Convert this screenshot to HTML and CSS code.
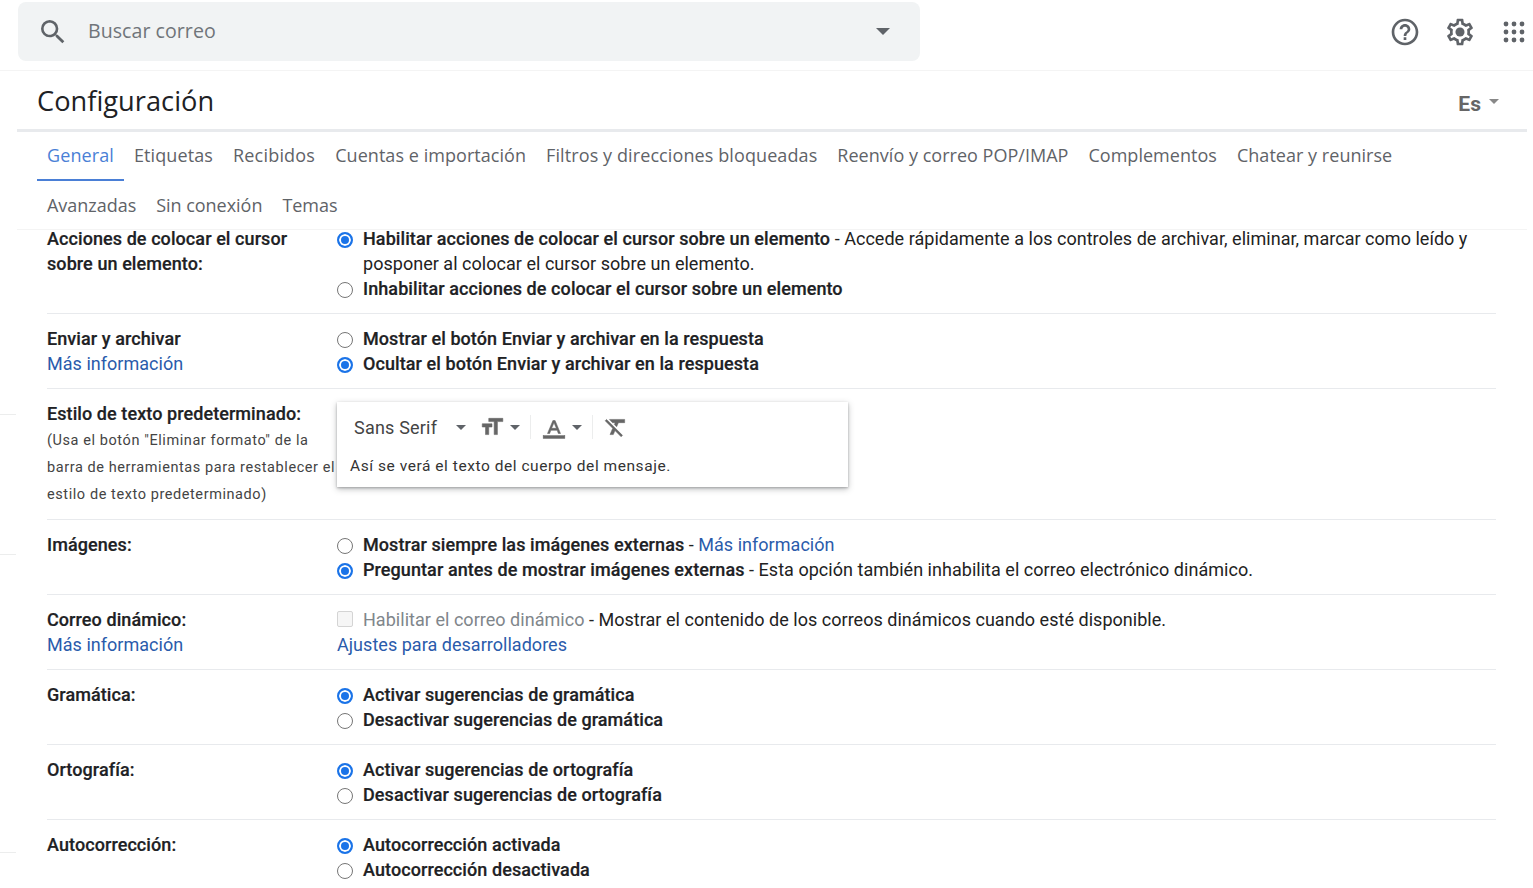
FILE: index.html
```html
<!DOCTYPE html>
<html lang="es">
<head>
<meta charset="utf-8">
<title>Configuración</title>
<link rel="stylesheet" href="styles.css">
</head>
<body>
<i class="tick tick-a"></i><i class="tick tick-b"></i><i class="tick tick-c"></i>
<header class="topbar">
  <div class="search">
    <svg class="search-icon" viewBox="0 0 24 24"><path d="M15.5 14h-.79l-.28-.27A6.471 6.471 0 0 0 16 9.5 6.5 6.5 0 1 0 9.5 16c1.61 0 3.09-.59 4.23-1.57l.27.28v.79l5 4.99L20.49 19l-4.99-5zm-6 0C7.01 14 5 11.99 5 9.5S7.01 5 9.5 5 14 7.01 14 9.5 11.99 14 9.5 14z"/></svg>
    <span class="search-text">Buscar correo</span>
    <span class="caret caret-search"></span>
  </div>
  <div class="top-icons">
    <svg class="top-icon" viewBox="0 0 24 24"><path d="M11 18h2v-2h-2v2zm1-16C6.48 2 2 6.48 2 12s4.48 10 10 10 10-4.48 10-10S17.52 2 12 2zm0 18c-4.41 0-8-3.59-8-8s3.59-8 8-8 8 3.59 8 8-3.59 8-8 8zm0-14c-2.21 0-4 1.79-4 4h2c0-1.1.9-2 2-2s2 .9 2 2c0 2-3 1.75-3 5h2c0-2.25 3-2.5 3-5 0-2.21-1.79-4-4-4z"/></svg>
    <svg class="top-icon" viewBox="0 0 24 24"><path d="M19.43 12.98c.04-.32.07-.64.07-.98 0-.34-.03-.66-.07-.98l2.11-1.65c.19-.15.24-.42.12-.64l-2-3.46c-.09-.16-.26-.25-.44-.25-.06 0-.12.01-.17.03l-2.49 1c-.52-.4-1.08-.73-1.69-.98l-.38-2.65C14.46 2.18 14.25 2 14 2h-4c-.25 0-.46.18-.49.42l-.38 2.65c-.61.25-1.17.59-1.69.98l-2.49-1c-.06-.02-.12-.03-.18-.03-.17 0-.34.09-.43.25l-2 3.46c-.13.22-.07.49.12.64l2.11 1.65c-.04.32-.07.65-.07.98 0 .33.03.66.07.98l-2.11 1.65c-.19.15-.24.42-.12.64l2 3.46c.09.16.26.25.44.25.06 0 .12-.01.17-.03l2.49-1c.52.4 1.08.73 1.69.98l.38 2.65c.03.24.24.42.49.42h4c.25 0 .46-.18.49-.42l.38-2.65c.61-.25 1.17-.59 1.69-.98l2.49 1c.06.02.12.03.18.03.17 0 .34-.09.43-.25l2-3.46c.12-.22.07-.49-.12-.64l-2.11-1.65zm-1.98-1.71c.04.31.05.52.05.73 0 .21-.02.43-.05.73l-.14 1.13.89.7 1.08.84-.7 1.21-1.27-.51-1.04-.42-.9.68c-.43.32-.84.56-1.25.73l-1.06.43-.16 1.13-.2 1.35h-1.4l-.19-1.35-.16-1.13-1.06-.43c-.43-.18-.83-.41-1.23-.71l-.91-.7-1.06.43-1.27.51-.7-1.21 1.08-.84.89-.7-.14-1.13c-.03-.31-.05-.54-.05-.74s.02-.43.05-.73l.14-1.13-.89-.7-1.08-.84.7-1.21 1.27.51 1.04.42.9-.68c.43-.32.84-.56 1.25-.73l1.06-.43.16-1.13.2-1.35h1.39l.19 1.35.16 1.13 1.06.43c.43.18.83.41 1.23.71l.91.7 1.06-.43 1.27-.51.7 1.21-1.07.85-.89.7.14 1.13z"/><circle cx="12" cy="12" r="3.4"/></svg>
    <svg class="top-icon apps" viewBox="0 0 24 24"><circle cx="4" cy="4" r="2.4"/><circle cx="12" cy="4" r="2.4"/><circle cx="20" cy="4" r="2.4"/><circle cx="4" cy="12" r="2.4"/><circle cx="12" cy="12" r="2.4"/><circle cx="20" cy="12" r="2.4"/><circle cx="4" cy="20" r="2.4"/><circle cx="12" cy="20" r="2.4"/><circle cx="20" cy="20" r="2.4"/></svg>
  </div>
</header>

<main class="panel">
  <div class="title-row">
    <h1 class="title">Configuración</h1>
    <div class="lang"><span>Es</span><span class="caret caret-lang"></span></div>
  </div>
  <nav class="tabs">
    <a class="tab active">General</a><a class="tab">Etiquetas</a><a class="tab">Recibidos</a><a class="tab">Cuentas e importación</a><a class="tab">Filtros y direcciones bloqueadas</a><a class="tab">Reenvío y correo POP/IMAP</a><a class="tab">Complementos</a><a class="tab">Chatear y reunirse</a><a class="tab">Avanzadas</a><a class="tab">Sin conexión</a><a class="tab">Temas</a>
  </nav>
  <div class="rows">
    <section class="row row-first">
      <div class="label"><b>Acciones de colocar el cursor<br>sobre un elemento:</b></div>
      <div class="opts">
        <div class="opt"><span class="radio on"></span><div><b>Habilitar acciones de colocar el cursor sobre un elemento</b> <span>- Accede rápidamente a los controles de archivar, eliminar, marcar como leído y</span><br><span>posponer al colocar el cursor sobre un elemento.</span></div></div>
        <div class="opt"><span class="radio"></span><div><b>Inhabilitar acciones de colocar el cursor sobre un elemento</b></div></div>
      </div>
    </section>
    <section class="row">
      <div class="label"><b>Enviar y archivar</b><br><a class="link">Más información</a></div>
      <div class="opts">
        <div class="opt"><span class="radio"></span><div><b>Mostrar el botón Enviar y archivar en la respuesta</b></div></div>
        <div class="opt"><span class="radio on"></span><div><b>Ocultar el botón Enviar y archivar en la respuesta</b></div></div>
      </div>
    </section>
    <section class="row">
      <div class="label"><b>Estilo de texto predeterminado:</b><p class="note">(Usa el botón "Eliminar formato" de la barra de herramientas para restablecer el estilo de texto predeterminado)</p></div>
      <div class="opts">
        <div class="editor">
          <div class="toolbar">
            <span class="font-name">Sans Serif</span><span class="caret caret-font"></span>
            <svg class="tool" viewBox="0 0 24 24"><path d="M9 4v3h5v12h3V7h5V4H9zm-6 8h3v7h3v-7h3V9H3v3z"/></svg><span class="caret caret-tool"></span>
            <span class="divider"></span>
            <svg class="tool" viewBox="0 0 24 24"><path d="M11 6L6 18h2l1.1-3h5.8l1.1 3h2L13 6h-2zm-1.2 7.2L12 8l2.2 5.2H9.8z"/><rect x="2" y="20" width="20" height="2.5"/></svg><span class="caret caret-tool"></span>
            <span class="divider"></span>
            <svg class="tool" viewBox="0 0 24 24"><path d="M3.27 5L2 6.27l6.97 6.97L6.5 19h3l1.57-3.66L16.73 21 18 19.73 3.55 5.27 3.27 5zM6 5v.18L8.82 8h2.4l-.72 1.68 2.1 2.1L14.21 8H20V5H6z"/></svg>
          </div>
          <div class="preview">Así se verá el texto del cuerpo del mensaje.</div>
        </div>
      </div>
    </section>
    <section class="row">
      <div class="label"><b>Imágenes:</b></div>
      <div class="opts">
        <div class="opt"><span class="radio"></span><div><b>Mostrar siempre las imágenes externas</b> - <a class="link">Más información</a></div></div>
        <div class="opt"><span class="radio on"></span><div><b>Preguntar antes de mostrar imágenes externas</b> - Esta opción también inhabilita el correo electrónico dinámico.</div></div>
      </div>
    </section>
    <section class="row">
      <div class="label"><b>Correo dinámico:</b><br><a class="link">Más información</a></div>
      <div class="opts">
        <div class="opt"><span class="check"></span><div><span class="muted">Habilitar el correo dinámico</span> - Mostrar el contenido de los correos dinámicos cuando esté disponible.</div></div>
        <a class="link">Ajustes para desarrolladores</a>
      </div>
    </section>
    <section class="row">
      <div class="label"><b>Gramática:</b></div>
      <div class="opts">
        <div class="opt"><span class="radio on"></span><div><b>Activar sugerencias de gramática</b></div></div>
        <div class="opt"><span class="radio"></span><div><b>Desactivar sugerencias de gramática</b></div></div>
      </div>
    </section>
    <section class="row">
      <div class="label"><b>Ortografía:</b></div>
      <div class="opts">
        <div class="opt"><span class="radio on"></span><div><b>Activar sugerencias de ortografía</b></div></div>
        <div class="opt"><span class="radio"></span><div><b>Desactivar sugerencias de ortografía</b></div></div>
      </div>
    </section>
    <section class="row">
      <div class="label"><b>Autocorrección:</b></div>
      <div class="opts">
        <div class="opt"><span class="radio on"></span><div><b>Autocorrección activada</b></div></div>
        <div class="opt"><span class="radio"></span><div><b>Autocorrección desactivada</b></div></div>
      </div>
    </section>
  </div>
</main>
</body>
</html>
```

FILE: styles.css
```css
* { box-sizing: border-box; }
html, body { height: 100%; }
body {
  margin: 0;
  overflow: hidden;
  background: #fff;
  color: #222;
  font-family: Roboto, "Liberation Sans", sans-serif;
  font-size: 18px;
  line-height: 25px;
  letter-spacing: .03px;
  position: relative;
}
b { font-weight: 500; color: #202124; letter-spacing: .08px; -webkit-text-stroke: .2px #202124; }

.tick { position: absolute; left: 0; width: 16px; height: 1px; background: #eceded; }
.tick-a { top: 414px; }
.tick-b { top: 554px; }
.tick-c { top: 852px; }

.topbar {
  height: 71px;
  padding: 2px 0 0 18px;
  display: flex;
  align-items: flex-start;
  border-bottom: 1px solid #f4f4f4;
}
.search {
  width: 902px;
  height: 59px;
  background: #f1f3f4;
  border-radius: 8px;
  display: flex;
  align-items: center;
  padding-left: 19px;
}
.search-icon { width: 32px; height: 32px; fill: #5f6368; flex: none; }
.search-text {
  margin: 0 0 2px 19px;
  flex: 1;
  font-family: "Open Sans", sans-serif;
  font-size: 19.6px;
  color: #70757a;
}
.caret {
  width: 0; height: 0;
  display: inline-block;
  border-left: 5px solid transparent;
  border-right: 5px solid transparent;
  border-top: 5px solid #5f6368;
}
.caret-search {
  margin-right: 30px;
  border-left-width: 7px;
  border-right-width: 7px;
  border-top-width: 7px;
}
.top-icons { margin-left: 469px; display: flex; align-items: center; gap: 23px; height: 59px; }
.top-icon { width: 32px; height: 32px; fill: #5f6368; flex: none; }
.top-icon.apps { width: 24px; height: 24px; margin-left: 3px; }

.panel { margin-left: 17px; }
.title-row {
  width: 1510px;
  height: 61px;
  padding: 0 28px 0 20px;
  display: flex;
  justify-content: space-between;
  align-items: center;
  border-bottom: 3px solid #e8eaed;
}
.title {
  margin: 0;
  font-family: "Open Sans", sans-serif;
  font-size: 27.2px;
  font-weight: 400;
  color: #202124;
}
.lang { display: flex; align-items: center; gap: 8px; margin-top: 8px; font-weight: 700; font-size: 21px; color: #666; }
.caret-lang { border-top-color: #888; margin-bottom: 6px; }

.tabs {
  height: 98px;
  padding-left: 20px;
  display: flex;
  flex-wrap: wrap;
  align-content: flex-start;
  row-gap: 1px;
  width: 1510px;
  border-bottom: 1px solid #f4f4f4;
}
.tab {
  height: 49px;
  padding: 0 10px 3px;
  display: flex;
  align-items: center;
  font-family: "Open Sans", sans-serif;
  font-size: 18px;
  letter-spacing: .1px;
  color: #5f6368;
}
.tab.active { color: #4a7fd6; border-bottom: 2px solid #4a7fd6; padding-bottom: 1px; }
.tab:nth-child(3) { letter-spacing: .2px; }
.tab:nth-child(4) { letter-spacing: .05px; }
.tab:nth-child(6) { letter-spacing: .02px; }
.tab:nth-child(7), .tab:nth-child(8) { letter-spacing: .03px; }
.tab:nth-child(8) { margin-right: 100px; }
.tab:nth-child(n+9) { letter-spacing: -.03px; }

.rows { margin-left: 30px; width: 1449px; margin-top: -4px; }
.row {
  display: grid;
  grid-template-columns: 290px 1fr;
  padding: 12px 0;
  border-bottom: 1px solid #e8eaed;
}
.row-first { padding-top: 0; }
.row:last-child { border-bottom: 0; }
.link { color: #2a5bab; }
.note {
  margin: 1px 0 -1px;
  font-size: 14.5px;
  line-height: 27px;
  letter-spacing: .58px;
  color: #444;
  width: 292px;
}
.opt { display: flex; align-items: flex-start; }
.radio, .check { flex: none; margin-top: 6px; margin-right: 10px; }
.radio {
  width: 16px; height: 16px;
  border-radius: 50%;
  border: 1px solid #767676;
  background: #fff;
}
.radio.on {
  border: 2px solid #1a73e8;
  background: #1a73e8;
  box-shadow: inset 0 0 0 2px #fff;
}
.check {
  width: 16px; height: 16px;
  margin-top: 4px;
  border: 1px solid #d4d4d4;
  border-radius: 2px;
  background: #f6f6f6;
}
.muted { color: #80868b; }

.editor {
  width: 511px;
  height: 85px;
  margin-top: 1px;
  background: #fff;
  box-shadow: 0 1px 2px rgba(60,64,67,.3), 0 2px 6px rgba(60,64,67,.35);
  padding: 11px 13px 0 13px;
}
.toolbar { display: flex; align-items: center; height: 28px; }
.font-name { margin-left: 4px; width: 102px; letter-spacing: .2px; color: #444; }
.caret-font { border-top-color: #5f6368; margin-right: 13px; }
.tool { width: 26px; height: 26px; fill: #666; stroke: #666; stroke-width: .5; flex: none; }
.caret-tool { margin-left: 5px; }
.divider { width: 1px; height: 24px; background: #eceded; margin: 0 10px; }
.preview { margin-top: 13px; font-size: 15.5px; letter-spacing: .55px; color: #333; }
```
